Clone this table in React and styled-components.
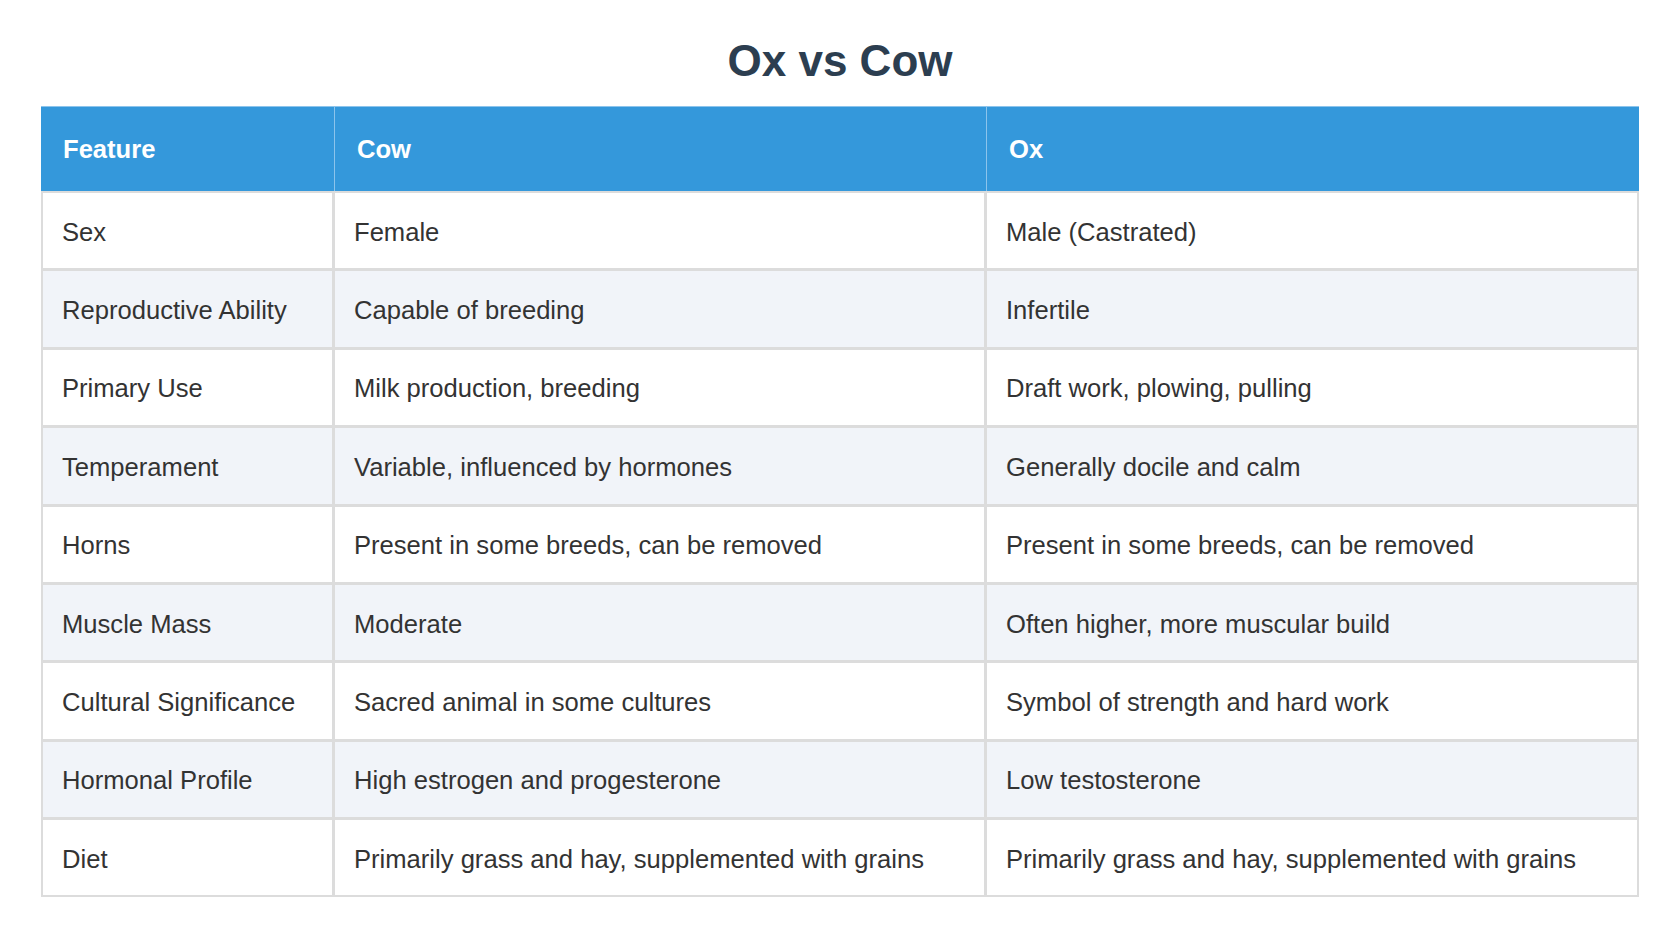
import React from 'react';
import styled, { createGlobalStyle } from 'styled-components';

const GlobalStyle = createGlobalStyle`
	html, body { margin: 0; padding: 0; background: #ffffff; }
	body { font-family: "Liberation Sans", Arial, Helvetica, sans-serif; }
`;

//CSS
const Page = styled.div`
	padding: 36px 41px 0;
	color: #333333;
`;

const Title = styled.h1`
	margin: 0 0 20px;
	text-align: center;
	font-size: 44px;
	font-weight: bold;
	color: #2c3e50;
`;

const Table = styled.table`
	width: 1598px;
	table-layout: fixed;
	border-collapse: separate;
	border-spacing: 0;
	font-size: 25.6px;
`;

const HeadCell = styled.th`
	background: #3498db;
	color: #ffffff;
	font-weight: bold;
	text-align: left;
	line-height: 29px;
	padding: 27.5px 22px;
	border-top: 1px solid #8cc4ec;
	border-right: ${props => (props.last ? '0' : '1px solid #8cc4ec')};
`;

const Row = styled.tr`
	background: ${props => (props.striped ? '#f1f4f9' : '#ffffff')};
`;

const Cell = styled.td`
	padding: 24.7px 19px 21.7px;
	line-height: 29px;
	border-top: ${props => (props.firstRow ? '2px solid #dcdcdc' : '0')};
	border-bottom: ${props => (props.lastRow ? '2px' : '3px')} solid #dcdcdc;
	border-left: ${props => (props.first ? '2px solid #dcdcdc' : '0')};
	border-right: ${props => (props.last ? '2px' : '3px')} solid #dcdcdc;
	white-space: nowrap;
`;

const columns = ["Feature", "Cow", "Ox"];

const rows = [
	["Sex", "Female", "Male (Castrated)"],
	["Reproductive Ability", "Capable of breeding", "Infertile"],
	["Primary Use", "Milk production, breeding", "Draft work, plowing, pulling"],
	["Temperament", "Variable, influenced by hormones", "Generally docile and calm"],
	["Horns", "Present in some breeds, can be removed", "Present in some breeds, can be removed"],
	["Muscle Mass", "Moderate", "Often higher, more muscular build"],
	["Cultural Significance", "Sacred animal in some cultures", "Symbol of strength and hard work"],
	["Hormonal Profile", "High estrogen and progesterone", "Low testosterone"],
	["Diet", "Primarily grass and hay, supplemented with grains", "Primarily grass and hay, supplemented with grains"]
];

export default function App() {
	return (
		<Page>
			<GlobalStyle />
			<Title>Ox vs Cow</Title>
			<Table>
				<colgroup>
					<col style={{ width: 294 }} />
					<col style={{ width: 652 }} />
					<col style={{ width: 652 }} />
				</colgroup>
				<thead>
					<tr>
						{columns.map((name, i) =>
							<HeadCell key={name} last={i === columns.length - 1}>{name}</HeadCell>
						)}
					</tr>
				</thead>
				<tbody>
					{rows.map((row, r) =>
						<Row key={row[0]} striped={r % 2 === 1}>
							{row.map((text, c) =>
								<Cell
									key={c}
									first={c === 0}
									last={c === row.length - 1}
									firstRow={r === 0}
									lastRow={r === rows.length - 1}
								>
									{text}
								</Cell>
							)}
						</Row>
					)}
				</tbody>
			</Table>
		</Page>
	);
}
